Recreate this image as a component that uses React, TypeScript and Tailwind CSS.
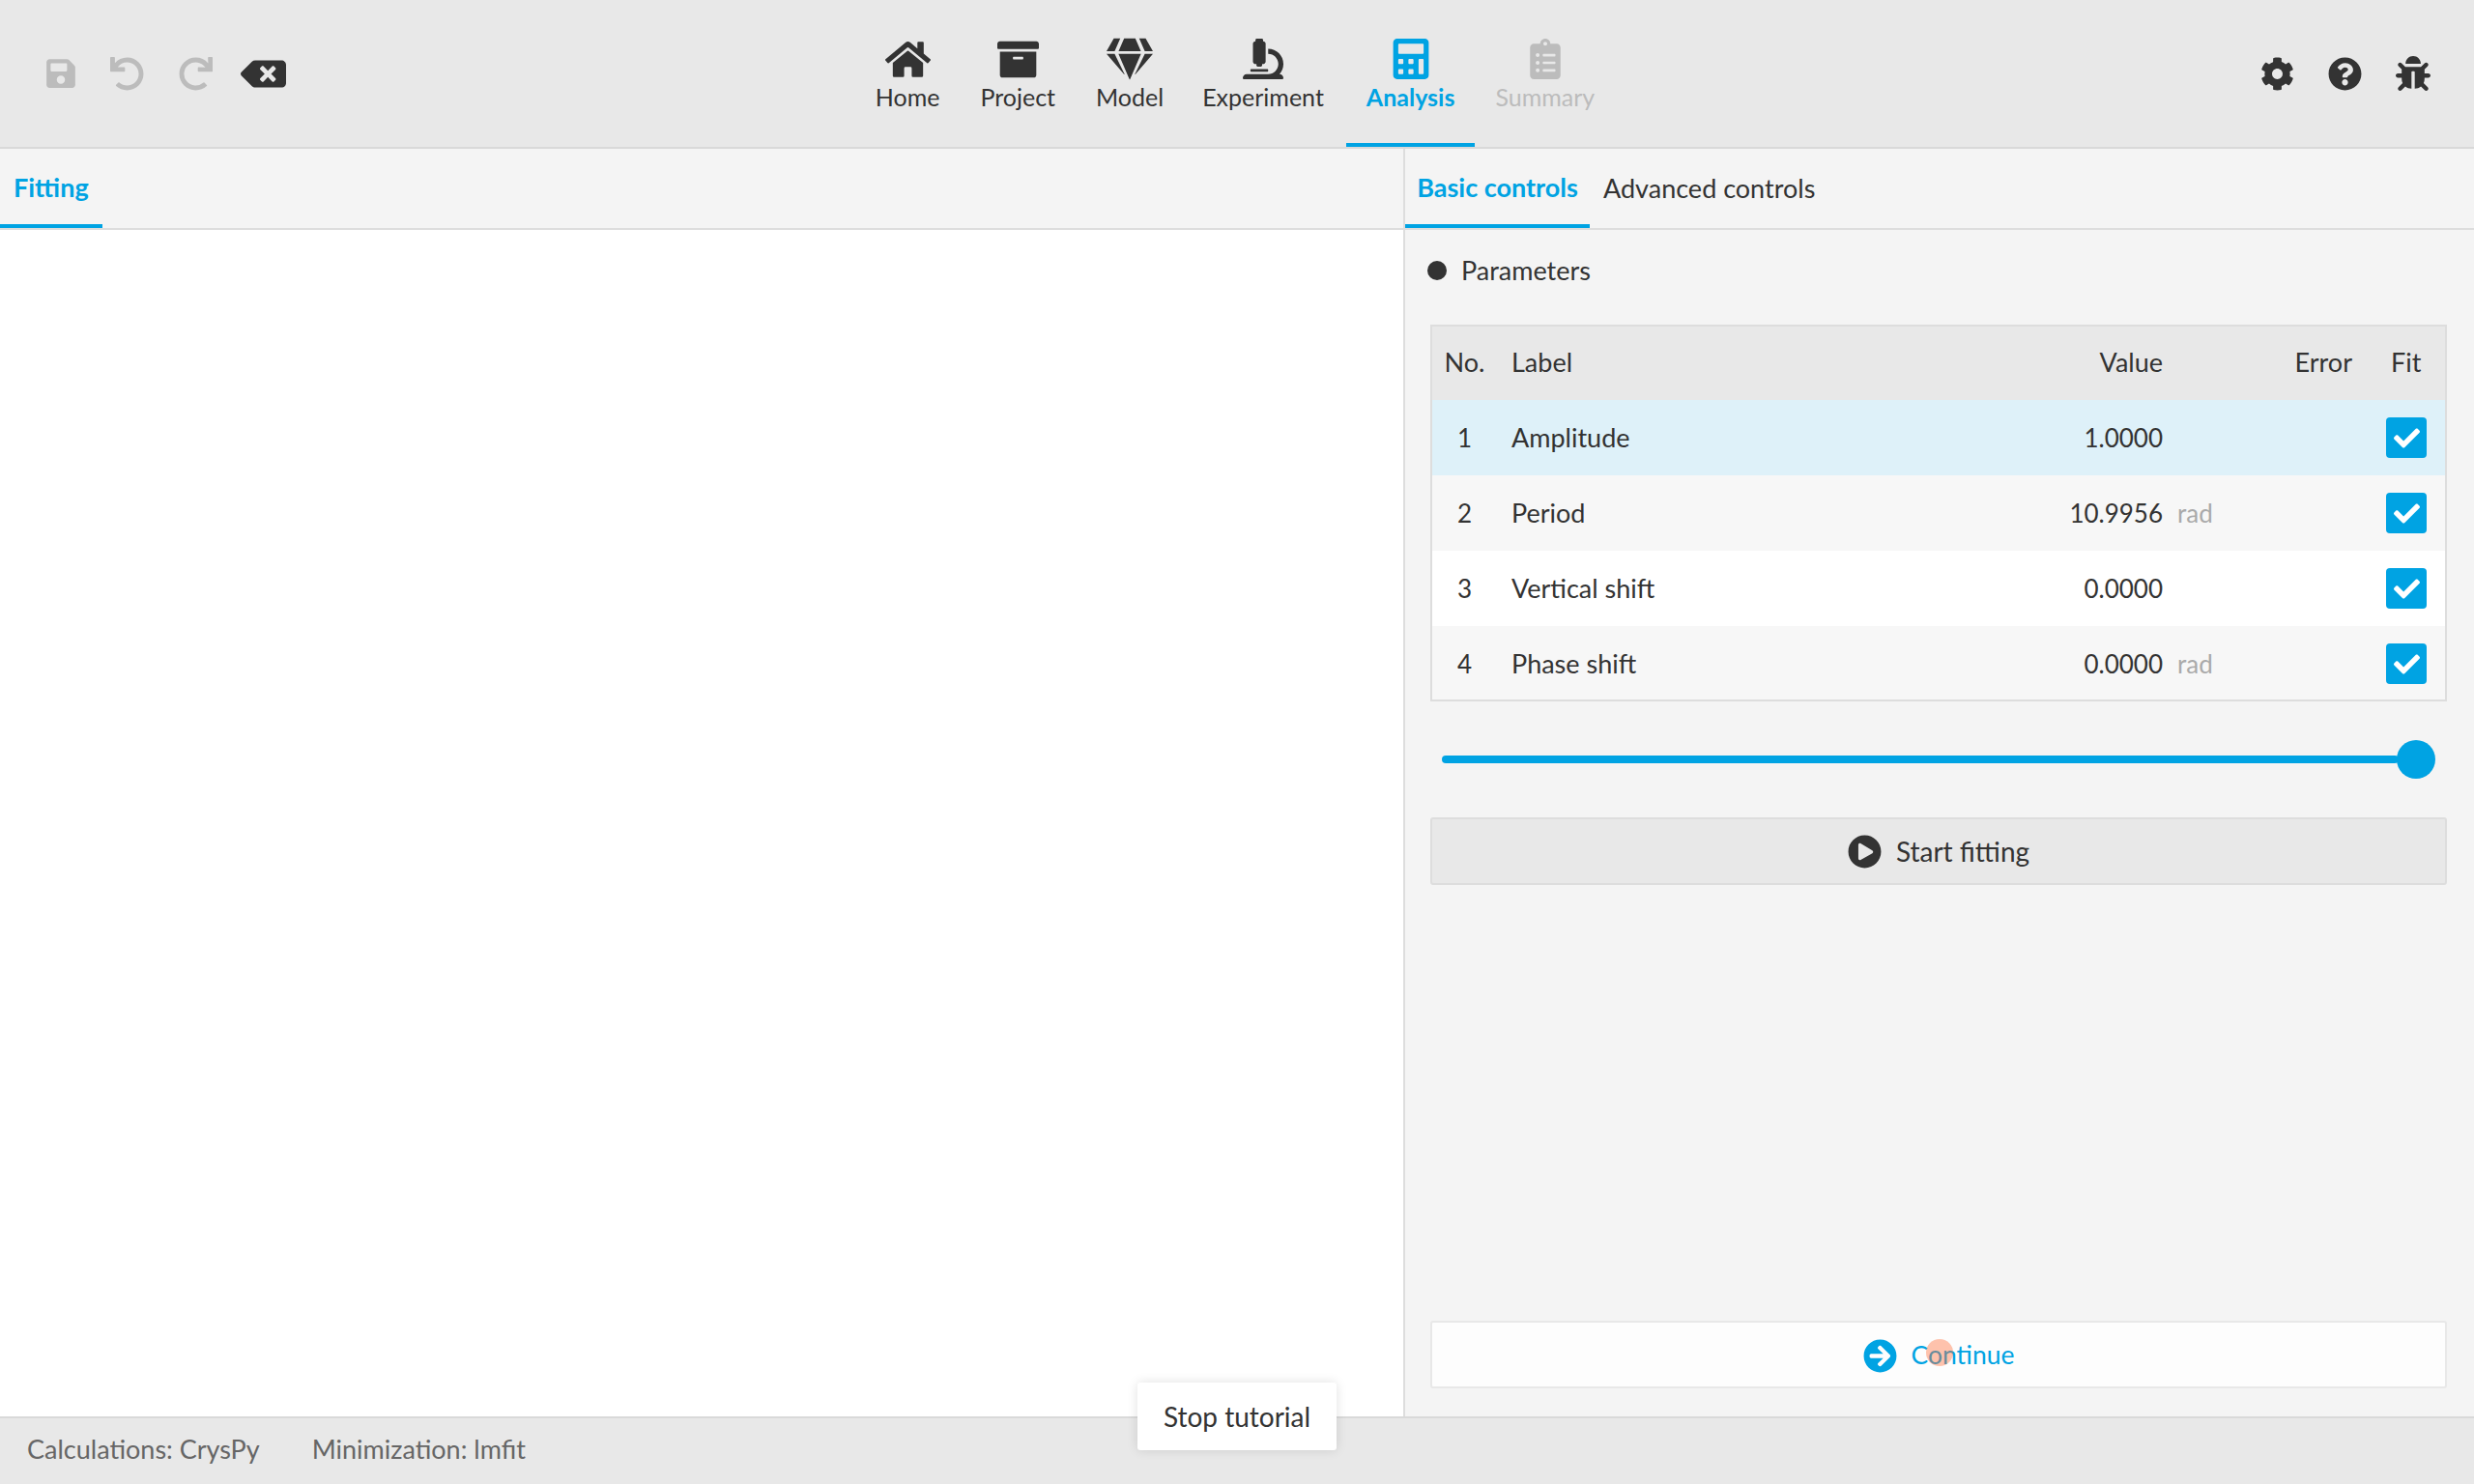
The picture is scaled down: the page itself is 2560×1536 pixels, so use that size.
import React from "react";
import {
  FaSave,
  FaUndo,
  FaRedo,
  FaBackspace,
  FaHome,
  FaArchive,
  FaGem,
  FaMicroscope,
  FaCalculator,
  FaClipboardList,
  FaCog,
  FaQuestionCircle,
  FaBug,
  FaPlayCircle,
  FaArrowCircleRight,
  FaCheck,
} from "react-icons/fa";

const navItems = [
  { label: "Home", icon: <FaHome size={47} />, cls: "text-[#333333] px-[21px]" },
  { label: "Project", icon: <FaArchive size={43} />, cls: "text-[#333333] px-[21px]" },
  { label: "Model", icon: <FaGem size={48} />, cls: "text-[#333333] pl-[21px] pr-[19px]" },
  { label: "Experiment", icon: <FaMicroscope size={42} />, cls: "text-[#333333] pl-[21px] pr-[23px]" },
  { label: "Analysis", icon: <FaCalculator size={42} />, cls: "text-[#00a3e3] font-bold px-[21px]" },
  { label: "Summary", icon: <FaClipboardList size={42} />, cls: "text-[#bcbcbc] px-[21px]" },
];

const rows = [
  { no: 1, label: "Amplitude", value: "1.0000", unit: "", bg: "bg-[#def1f9]", h: "h-[78px]" },
  { no: 2, label: "Period", value: "10.9956", unit: "rad", bg: "bg-[#f7f7f7]", h: "h-[78px]" },
  { no: 3, label: "Vertical shift", value: "0.0000", unit: "", bg: "bg-white", h: "h-[78px]" },
  { no: 4, label: "Phase shift", value: "0.0000", unit: "rad", bg: "bg-[#f7f7f7]", h: "h-[76px] pt-[2px]" },
];

const rowGrid = "grid grid-cols-[67px_549px_140px_196px_96px] items-center";

export default function App() {
  return (
    <div className="relative flex h-[1536px] w-[2560px] flex-col overflow-hidden bg-[#f4f4f4] font-['Lato','Noto_Sans',sans-serif] text-[27px] text-[#333333]">
      {/* top bar */}
      <header className="flex h-[154px] shrink-0 items-start border-b-2 border-[#d9d9d9] bg-[#e8e8e8]">
        <div className="flex h-[152px] flex-1 items-center pl-[46px]">
          <FaSave size={34} className="text-[#bcbcbc]" />
          <FaUndo size={35} className="ml-[34px] text-[#bcbcbc]" />
          <FaRedo size={35} className="ml-[36px] text-[#bcbcbc]" />
          <FaBackspace size={47} className="ml-[29px] text-[#333333]" />
        </div>
        <nav className="mr-[5px] flex h-[152px] text-[25px]">
          {navItems.map((item) => (
            <div
              key={item.label}
              className={`flex h-[152px] flex-col items-center border-b-4 pt-[38px] ${item.cls} ${
                item.label === "Analysis" ? "border-[#00a3e3]" : "border-transparent"
              }`}
            >
              <div className="flex h-[46px] items-center">{item.icon}</div>
              <span className="leading-[32px]">{item.label}</span>
            </div>
          ))}
        </nav>
        <div className="flex h-[152px] flex-1 items-center justify-end gap-[35px] pr-[45px] text-[#333333]">
          <FaCog size={35} />
          <FaQuestionCircle size={35} />
          <FaBug size={36} />
        </div>
      </header>

      <main className="flex min-h-0 flex-1">
        {/* left panel */}
        <section className="flex w-[1452px] shrink-0 flex-col bg-white">
          <div className="flex h-[84px] shrink-0 border-b-2 border-[#dddddd] bg-[#f4f4f4]">
            <div className="flex h-[82px] items-center border-b-4 border-[#00a3e3] px-[14px] pt-[2px] font-bold text-[#00a3e3]">
              Fitting
            </div>
          </div>
          <div className="flex-1" />
        </section>

        {/* right panel */}
        <section className="flex min-w-0 flex-1 flex-col border-l-2 border-[#dddddd]">
          <div className="flex h-[84px] shrink-0 border-b-2 border-[#dddddd]">
            <div className="flex h-[82px] w-[191px] items-center justify-center border-b-4 border-[#00a3e3] pt-[2px] font-bold text-[#00a3e3]">
              Basic controls
            </div>
            <div className="flex h-[82px] items-center pl-[14px]">Advanced controls</div>
          </div>

          <div className="flex min-h-0 flex-1 flex-col pl-[26px] pr-[28px]">
            <div className="flex h-[84px] shrink-0 items-center">
              <span className="-ml-[3px] h-[20px] w-[20px] rounded-full bg-[#333333]" />
              <span className="ml-[15px]">Parameters</span>
            </div>

            <div className="mt-[14px] shrink-0 border-2 border-[#dddddd]">
              <div className={`${rowGrid} h-[76px] bg-[#e8e8e8] pb-[2px]`}>
                <span className="text-center">No.</span>
                <span className="pl-[15px]">Label</span>
                <span className="text-right">Value</span>
                <span className="text-right">Error</span>
                <span className="pl-[40px]">Fit</span>
              </div>
              {rows.map((row) => (
                <div key={row.no} className={`${rowGrid} ${row.h} ${row.bg}`}>
                  <span className="text-center text-[26px]">{row.no}</span>
                  <span className="pl-[15px]">{row.label}</span>
                  <span className="text-right text-[26px]">{row.value}</span>
                  <span className="pl-[15px] text-[26px] text-[#aaaaaa]">{row.unit}</span>
                  <span className="pl-[35px]">
                    <span className="flex h-[42px] w-[42px] items-center justify-center rounded-[4px] bg-[#00a3e3] text-white">
                      <FaCheck size={27} />
                    </span>
                  </span>
                </div>
              ))}
            </div>

            <div className="mt-[40px] flex h-[40px] shrink-0 items-center pl-[12px] pr-[12px]">
              <div className="h-[8px] flex-1 rounded-full bg-[#00a3e3]" />
              <div className="-ml-[2px] h-[40px] w-[40px] rounded-full bg-[#00a3e3]" />
            </div>

            <div className="mt-[40px] flex h-[70px] shrink-0 items-center justify-center rounded-[3px] border-2 border-[#dddddd] bg-[#e8e8e8]">
              <FaPlayCircle size={35} />
              <span className="ml-[15px] text-[28px]">Start fitting</span>
            </div>

            <div className="mb-[29px] mt-auto flex h-[70px] shrink-0 items-center justify-center rounded-[3px] border-2 border-[#e8e8e8] bg-[#fdfdfd] pt-[2px] text-[#00a3e3]">
              <FaArrowCircleRight size={35} />
              <span className="relative ml-[15px] text-[26.5px]">
                Continue
                <span className="absolute left-[15px] top-[3px] h-[28px] w-[28px] rounded-full bg-[#ff6a32]/40" />
              </span>
            </div>
          </div>
        </section>
      </main>

      {/* status bar */}
      <footer className="flex h-[70px] shrink-0 items-center gap-[54px] border-t-2 border-[#d9d9d9] bg-[#e8e8e8] pb-[4px] pl-[28px] text-[#666666]">
        <span>Calculations: CrysPy</span>
        <span>Minimization: lmfit</span>
      </footer>

      {/* tutorial button */}
      <div className="absolute left-[1177px] top-[1431px] flex h-[70px] w-[206px] items-center justify-center rounded-[3px] bg-white text-[28px] shadow-[0_0_12px_rgba(0,0,0,0.12)]">
        Stop tutorial
      </div>
    </div>
  );
}
